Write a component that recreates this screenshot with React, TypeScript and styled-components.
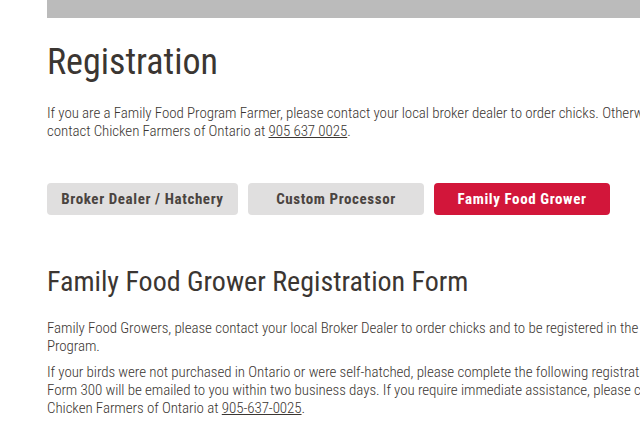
import React from "react";
import styled, { createGlobalStyle, css } from "styled-components";

//////////////////////////////////////////////////////////////////////////////

const GlobalStyle = createGlobalStyle`
  html, body {
    margin: 0;
    padding: 0;
    background: #ffffff;
  }
  body {
    font-family: "Roboto Condensed", "Liberation Sans Narrow", "Arial Narrow", Roboto, sans-serif;
    color: #3b3632;
    overflow: hidden;
  }
`;

const SPage = styled.div`
  width: 640px;
  height: 432px;
  overflow: hidden;
  padding-left: 47px;
  box-sizing: border-box;
`;

const STopBar = styled.div`
  height: 18px;
  width: 700px;
  background-color: #bbbbbb;
`;

const STitle = styled.h1`
  margin: 23px 0 0 0;
  font-size: 36px;
  line-height: 42px;
  font-weight: 400;
  color: #3b3632;
  white-space: nowrap;
`;

const SSubTitle = styled.h2`
  margin: 0;
  font-size: 28px;
  line-height: 36px;
  font-weight: 400;
  color: #3b3632;
  white-space: nowrap;
`;

interface ISText {
  lineHeight: number;
}

const SText = styled.p<ISText>`
  margin: 0 0 8px 0;
  white-space: nowrap;
  font-size: 15px;
  font-weight: 300;
  letter-spacing: -0.08px;
  line-height: ${(props) => props.lineHeight}px;
  color: #3b3632;
`;

const SLink = styled.a`
  color: #3b3632;
  text-decoration: underline;
`;

const SIntro = styled.div`
  margin-top: 22px;
`;

const SButtonRow = styled.div`
  display: flex;
  gap: 10px;
  margin: 43px 0 49px 0;
`;

interface ISButton {
  active?: boolean;
  width: number;
}

const SButton = styled.button<ISButton>`
  height: 32px;
  width: ${(props) => props.width}px;
  border: none;
  border-radius: 4px;
  font-family: inherit;
  font-size: 15px;
  letter-spacing: 0.6px;
  font-weight: 700;
  background-color: #e0dfdf;
  color: #4a4440;
  padding: 0;

  ${(props) =>
    props.active === true &&
    css`
      background-color: #d2163a;
      color: #ffffff;
    `}
`;

const SForm = styled.div`
  display: flex;
  flex-direction: column;
`;

const SFormText = styled.div`
  margin-top: 19px;
`;

////////////////////////////////////////////////////////////////////////////

const App = () => {
  return (
    <SPage>
      <GlobalStyle />
      <STopBar />
      <STitle>Registration</STitle>

      <SIntro>
        <SText lineHeight={17.5}>
          If you are a Family Food Program Farmer, please contact your local
          broker dealer to order chicks. Otherwise, please
          <br />
          contact Chicken Farmers of Ontario at{" "}
          <SLink href="#">905 637 0025</SLink>.
        </SText>
      </SIntro>

      <SButtonRow>
        <SButton width={191}>Broker Dealer / Hatchery</SButton>
        <SButton width={176}>Custom Processor</SButton>
        <SButton width={176} active>
          Family Food Grower
        </SButton>
      </SButtonRow>

      <SForm>
        <SSubTitle>Family Food Grower Registration Form</SSubTitle>
        <SFormText>
          <SText lineHeight={18}>
            Family Food Growers, please contact your local Broker Dealer to
            order chicks and to be registered in the Family Food
            <br />
            Program.
          </SText>
          <SText lineHeight={18}>
            If your birds were not purchased in Ontario or were self-hatched,
            please complete the following registration form.
            <br />
            Form 300 will be emailed to you within two business days. If you
            require immediate assistance, please contact
            <br />
            Chicken Farmers of Ontario at <SLink href="#">905-637-0025</SLink>.
          </SText>
        </SFormText>
      </SForm>
    </SPage>
  );
};

export default App;
